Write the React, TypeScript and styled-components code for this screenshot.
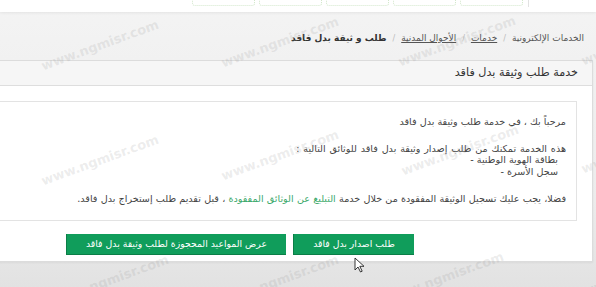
import React from "react";
import styled, { createGlobalStyle } from "styled-components";

const GlobalStyle = createGlobalStyle`
  html, body {
    margin: 0;
    padding: 0;
    overflow: hidden;
  }
  body {
    font-family: "DejaVu Sans", "Noto Sans", sans-serif;
    background: #e9e9e9;
  }
`;

const Page = styled.div`
  position: relative;
  width: 596px;
  height: 287px;
  overflow: hidden;
  direction: rtl;
  background: linear-gradient(#f4f4f4 0, #f1f1f1 60px, #ececec 200px, #e2e2e2 287px);
`;

const TopBar = styled.div`
  height: 12px;
  background: #fff;
  box-shadow: 0 1px 3px rgba(0, 0, 0, 0.07);
  display: flex;
  align-items: flex-start;
  padding-right: 67px;
  gap: 4px;
`;

const Separator = styled.div`
  width: 1px;
  height: 7px;
  background: #e2e2e2;
  margin-left: 1px;
`;

const Tab = styled.div`
  width: 61px;
  height: 10px;
  margin-top: -5px;
  border: 1px dotted #d3e8cc;
  border-top: none;
  border-radius: 0 0 3px 3px;
  background: #fff;
`;

const Breadcrumb = styled.nav`
  display: flex;
  align-items: center;
  gap: 6px;
  height: 14px;
  margin-top: 19px;
  padding-right: 12px;
  font-size: 9px;
  color: #555;
  white-space: nowrap;
`;

const Crumb = styled.span<{ $link?: boolean; $current?: boolean }>`
  text-decoration: ${(p) => (p.$link ? "underline" : "none")};
  font-weight: ${(p) => (p.$current ? "bold" : "normal")};
  color: ${(p) => (p.$current ? "#333" : "#555")};
`;

const Slash = styled.span`
  color: #bbb;
  font-size: 8px;
`;

const Panel = styled.section`
  margin-top: 15px;
  margin-right: 3px;
  margin-left: -300px;
  background: #fff;
  border: 1px solid #dcdcdc;
  box-shadow: 0 1px 2px rgba(0, 0, 0, 0.05);
`;

const PanelHeader = styled.h2`
  margin: 0;
  height: 24px;
  line-height: 24px;
  padding-right: 14px;
  font-size: 11.2px;
  font-weight: normal;
  color: #333;
  background: #f6f6f6;
  border-bottom: 1px solid #dedede;
`;

const PanelBody = styled.div`
  padding: 15px 15px 6px 15px;
`;

const InfoBox = styled.div`
  border: 1px solid #e3e3e3;
  padding: 14px 10px 15px 10px;
  font-size: 9.6px;
  line-height: 11.5px;
  color: #444;
`;

const Para = styled.p<{ $gap?: number; $spread?: number }>`
  margin: 0 0 ${(p) => p.$gap ?? 15}px 0;
  white-space: nowrap;
  word-spacing: ${(p) => p.$spread ?? 0}px;
  &:last-child {
    margin-bottom: 0;
  }
`;

const Line = styled.div<{ $spread?: number }>`
  word-spacing: ${(p) => p.$spread ?? 0}px;
`;

const ListItem = styled.div`
  display: flex;
  gap: 3px;
  padding-right: 8px;
`;

const Link = styled.span`
  color: #3aa86a;
`;

const Actions = styled.div`
  display: flex;
  gap: 7px;
  margin-top: 13px;
  padding-right: 163px;
`;

const Button = styled.button<{ $w: number }>`
  width: ${(p) => p.$w}px;
  height: 21px;
  padding: 0;
  border: none;
  border-bottom: 1px solid #0b7e47;
  border-left: 1px solid #0b7e47;
  background: #109d5b;
  color: #fff;
  font-family: inherit;
  font-size: 9.3px;
  cursor: pointer;
`;

const Overlay = styled.div`
  position: absolute;
  inset: 0;
  pointer-events: none;
  direction: ltr;
`;

const Mark = styled.span<{ $x: number; $y: number }>`
  position: absolute;
  left: ${(p) => p.$x}px;
  top: ${(p) => p.$y}px;
  transform: translate(-50%, -50%) rotate(-20deg);
  font-family: "DejaVu Sans", sans-serif;
  font-weight: bold;
  font-size: 13px;
  color: rgba(140, 140, 140, 0.17);
  white-space: nowrap;
`;

const Cursor = styled.svg`
  position: absolute;
  left: 354px;
  top: 257px;
`;

const marks: [number, number][] = [
  [100, 45], [280, 42], [457, 41], [640, 40],
  [100, 160], [280, 155], [460, 150], [640, 148],
  [110, 280], [280, 280], [445, 277], [630, 275],
];

const documents = ["بطاقة الهوية الوطنية", "سجل الأسرة"];

export default function App() {
  return (
    <>
      <GlobalStyle />
      <Page>
        <TopBar>
          <Separator />
          <Tab />
          <Tab />
          <Tab />
          <Tab />
          <Tab />
        </TopBar>
        <Breadcrumb>
          <Crumb>الخدمات الإلكترونية</Crumb>
          <Slash>/</Slash>
          <Crumb $link>خدمات</Crumb>
          <Slash>/</Slash>
          <Crumb $link>الأحوال المدنية</Crumb>
          <Slash>/</Slash>
          <Crumb $current>طلب و ثيقة بدل فاقد</Crumb>
        </Breadcrumb>
        <Panel>
          <PanelHeader>خدمة طلب وثيقة بدل فاقد</PanelHeader>
          <PanelBody>
            <InfoBox>
              <Para>مرحباً بك ، في خدمة طلب وثيقة بدل فاقد</Para>
              <Para $gap={16}>
                <Line $spread={0.8}>هذه الخدمة تمكنك من طلب إصدار وثيقة بدل فاقد للوثائق التالية :</Line>
                {documents.map((d) => (
                  <ListItem key={d}>
                    <span>{d}</span>
                    <span>-</span>
                  </ListItem>
                ))}
              </Para>
              <Para $spread={0.2}>
                فضلا، يجب عليك تسجيل الوثيقة المفقودة من خلال خدمة{" "}
                <Link>التبليغ عن الوثائق المفقودة</Link> ، قبل تقديم طلب إستخراج بدل فاقد.
              </Para>
            </InfoBox>
            <Actions>
              <Button $w={121}>طلب اصدار بدل فاقد</Button>
              <Button $w={220}>عرض المواعيد المحجوزة لطلب وثيقة بدل فاقد</Button>
            </Actions>
          </PanelBody>
        </Panel>
        <Overlay>
          {marks.map(([x, y], i) => (
            <Mark key={i} $x={x} $y={y}>
              www.ngmisr.com
            </Mark>
          ))}
          <Cursor width="11" height="16" viewBox="0 0 11 16">
            <path d="M1 1 L1 13 L4 10 L6.5 15 L8.2 14.2 L5.8 9.3 L10 9.3 Z" fill="#fff" stroke="#222" strokeWidth="0.9" strokeLinejoin="round" />
          </Cursor>
        </Overlay>
      </Page>
    </>
  );
}
